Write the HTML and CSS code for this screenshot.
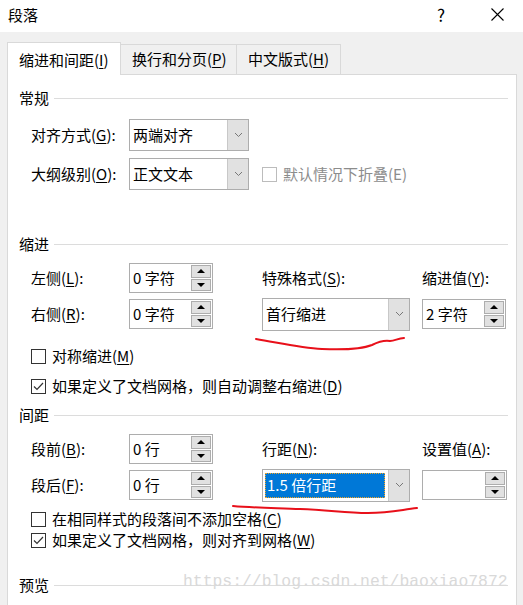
FILE: index.html
```html
<!DOCTYPE html>
<html lang="zh-CN">
<head>
    <meta charset="UTF-8">
    <title>段落</title>
    <link rel="stylesheet" href="styles.css">
</head>
<body>
<div class="window">
    <div class="titlebar">
        <span class="title">段落</span>
        <span class="help">?</span>
        <span class="close">
            <svg width="13" height="13" viewBox="0 0 13 13"><path d="M0.5 0.5 L12.5 12.5 M12.5 0.5 L0.5 12.5" stroke="#000" stroke-width="1.1" fill="none"/></svg>
        </span>
    </div>

    <div class="dialog">
        <div class="tabs">
            <div class="tab active">缩进和间距(<u>I</u>)</div>
            <div class="tab tab2">换行和分页(<u>P</u>)</div>
            <div class="tab tab3">中文版式(<u>H</u>)</div>
        </div>

        <div class="panel">
            <div class="heading h-general"><span>常规</span></div>
            <div class="grid general">
                <div class="lbl">对齐方式(<u>G</u>):</div>
                <div class="select w120"><span class="val">两端对齐</span><span class="arrow"><svg width="9" height="6" viewBox="0 0 9 6"><path d="M1 1 L4.5 4.5 L8 1" stroke="#777" fill="none"/></svg></span></div>
                <div></div>
                <div></div>
                <div class="lbl">大纲级别(<u>O</u>):</div>
                <div class="select w120"><span class="val">正文文本</span><span class="arrow"><svg width="9" height="6" viewBox="0 0 9 6"><path d="M1 1 L4.5 4.5 L8 1" stroke="#777" fill="none"/></svg></span></div>
                <div class="check disabled span2"><span class="box"></span>默认情况下折叠(E)</div>
            </div>

            <div class="heading h-indent"><span>缩进</span></div>
            <div class="grid indent">
                <div class="lbl">左侧(<u>L</u>):</div>
                <div class="spin"><span class="val">0 字符</span><span class="btns"><span class="btn up"></span><span class="btn down"></span></span></div>
                <div class="lbl">特殊格式(<u>S</u>):</div>
                <div class="lbl">缩进值(<u>Y</u>):</div>
                <div class="lbl">右侧(<u>R</u>):</div>
                <div class="spin"><span class="val">0 字符</span><span class="btns"><span class="btn up"></span><span class="btn down"></span></span></div>
                <div class="select w148 tall"><span class="val">首行缩进</span><span class="arrow"><svg width="9" height="6" viewBox="0 0 9 6"><path d="M1 1 L4.5 4.5 L8 1" stroke="#777" fill="none"/></svg></span></div>
                <div class="spin"><span class="val">2 字符</span><span class="btns"><span class="btn up"></span><span class="btn down"></span></span></div>
            </div>
            <div class="check c-mirror"><span class="box"></span>对称缩进(<u>M</u>)</div>
            <div class="check c-grid1"><span class="box checked"><svg width="13" height="13" viewBox="0 0 13 13"><path d="M2 6.5 L5 9.5 L11 3" stroke="#333" stroke-width="1.2" fill="none"/></svg></span>如果定义了文档网格，则自动调整右缩进(<u>D</u>)</div>

            <div class="heading h-spacing"><span>间距</span></div>
            <div class="grid spacing">
                <div class="lbl">段前(<u>B</u>):</div>
                <div class="spin"><span class="val">0 行</span><span class="btns"><span class="btn up"></span><span class="btn down"></span></span></div>
                <div class="lbl">行距(<u>N</u>):</div>
                <div class="lbl">设置值(<u>A</u>):</div>
                <div class="lbl">段后(<u>F</u>):</div>
                <div class="spin"><span class="val">0 行</span><span class="btns"><span class="btn up"></span><span class="btn down"></span></span></div>
                <div class="select w148 tall"><span class="val"><span class="picked">1.5 倍行距</span></span><span class="arrow"><svg width="9" height="6" viewBox="0 0 9 6"><path d="M1 1 L4.5 4.5 L8 1" stroke="#777" fill="none"/></svg></span></div>
                <div class="spin w85"><span class="val"></span><span class="btns"><span class="btn up"></span><span class="btn down"></span></span></div>
            </div>
            <div class="check c-nospace"><span class="box"></span>在相同样式的段落间不添加空格(<u>C</u>)</div>
            <div class="check c-grid2"><span class="box checked"><svg width="13" height="13" viewBox="0 0 13 13"><path d="M2 6.5 L5 9.5 L11 3" stroke="#333" stroke-width="1.2" fill="none"/></svg></span>如果定义了文档网格，则对齐到网格(<u>W</u>)</div>

            <div class="heading h-preview"><span>预览</span></div>
        </div>
    </div>

    <div class="watermark">https://blog.csdn.net/baoxiao7872</div>

    <svg class="scribble" width="523" height="605" viewBox="0 0 523 605">
        <path d="M256 339 C 280 343, 300 348, 322 349 C 345 350, 362 349, 372 345 C 380 341, 384 340, 390 341 C 395 341, 398 338, 404 338" stroke="#e8101a" stroke-width="2" fill="none" stroke-linecap="round"/>
        <path d="M233 506 C 255 508, 280 508, 300 509 C 330 510, 345 513, 368 513 C 390 513, 400 510, 417 508" stroke="#e8101a" stroke-width="2" fill="none" stroke-linecap="round"/>
    </svg>
</div>
</body>
</html>
```

FILE: styles.css
```css
body {
    margin: 0;
    padding: 0;
    font-family: "Noto Sans CJK SC", "Noto Sans", sans-serif;
    font-size: 15px;
    line-height: 20px;
    color: #000;
    background: #f0f0f0;
}

u {
    text-decoration-thickness: 1px;
    text-underline-offset: 2px;
}

.window {
    position: relative;
    width: 523px;
    height: 605px;
    overflow: hidden;
    background: #f0f0f0;
}

.titlebar {
    height: 32px;
    background: #fff;
    display: flex;
    align-items: center;
    padding: 0 0 3px 8px;
    box-sizing: border-box;
}

.title {
    flex: 1;
}

.help {
    font-size: 17px;
    width: 54px;
}

.close {
    display: flex;
    width: 32px;
}

.dialog {
    padding: 10px 0 0 7px;
}

.tabs {
    display: flex;
    align-items: flex-end;
    height: 32px;
}

.tab {
    box-sizing: border-box;
    height: 30px;
    border: 1px solid #d9d9d9;
    border-bottom: none;
    border-left: none;
    display: flex;
    align-items: center;
    padding-left: 11px;
    padding-bottom: 1px;
    background: #f0f0f0;
}

.tab.active {
    width: 114px;
    height: 33px;
    background: #fff;
    border-left: 1px solid #d9d9d9;
    margin-bottom: -1px;
    position: relative;
    z-index: 1;
    padding-top: 2px;
}

.tab2 {
    width: 116px;
}

.tab3 {
    width: 104px;
}

.panel {
    width: 510px;
    height: 540px;
    box-sizing: border-box;
    background: #fff;
    border: 1px solid #d9d9d9;
    border-bottom: none;
    padding-top: 13px;
}

.heading {
    display: flex;
    align-items: center;
    height: 20px;
    padding-left: 11px;
    margin-right: 8px;
}

.heading::after {
    content: "";
    flex: 1;
    height: 1px;
    background: #dcdcdc;
    margin-left: 5px;
}

.h-indent { margin-top: 44px; }
.h-spacing { margin-top: 9px; }
.h-preview { margin-top: 25px; }

.grid {
    display: grid;
    grid-template-columns: 98px 133px 160px 84px;
    align-items: center;
    padding-left: 23px;
}

.general {
    margin-top: 11px;
    grid-template-rows: 32px 32px;
    row-gap: 7px;
}

.indent {
    margin-top: 9px;
    grid-template-rows: 30px 30px;
    row-gap: 6px;
}

.spacing {
    margin-top: 9px;
    grid-template-rows: 30px 30px;
    row-gap: 6px;
}

.lbl {
    white-space: nowrap;
}

.span2 {
    grid-column: span 2;
}

.select {
    display: flex;
    box-sizing: border-box;
    height: 32px;
    border: 1px solid #adadad;
    background: #fff;
}

.select.tall {
    height: 33px;
}

.w120 { width: 120px; }
.w148 { width: 148px; }

.select .val {
    flex: 1;
    display: flex;
    align-items: center;
    padding-left: 3px;
    white-space: nowrap;
}

.select .arrow {
    width: 20px;
    background: #e1e1e1;
    border-left: 1px solid #c8c8c8;
    display: flex;
    align-items: center;
    justify-content: center;
}

.picked {
    display: flex;
    align-items: center;
    width: 120px;
    height: 25px;
    margin-left: -1px;
    padding-left: 2px;
    box-sizing: border-box;
    background: #0078d7;
    color: #fff;
    outline: 1px dotted #f5a623;
    outline-offset: -1px;
}

.spin {
    display: flex;
    box-sizing: border-box;
    width: 84px;
    height: 30px;
    border: 1px solid #adadad;
    background: #fff;
}

.spin.w85 {
    width: 85px;
}

.spin .val {
    flex: 1;
    padding-left: 3px;
    display: flex;
    align-items: center;
    white-space: nowrap;
}

.btns {
    width: 20px;
    display: flex;
    flex-direction: column;
    gap: 1px;
    padding: 1px 1px 1px 0;
}

.btn {
    flex: 1;
    background: #e1e1e1;
    border: 1px solid #adadad;
    display: flex;
    align-items: center;
    justify-content: center;
}

.btn.up::before {
    content: "";
    border-left: 4px solid transparent;
    border-right: 4px solid transparent;
    border-bottom: 4px solid #000;
}

.btn.down::before {
    content: "";
    border-left: 4px solid transparent;
    border-right: 4px solid transparent;
    border-top: 4px solid #000;
}

.check {
    display: flex;
    align-items: center;
    height: 20px;
    white-space: nowrap;
}

.check .box {
    box-sizing: border-box;
    width: 15px;
    height: 15px;
    border: 1px solid #333;
    margin-right: 6px;
    display: flex;
    align-items: center;
    justify-content: center;
    background: #fff;
}

.check.disabled {
    color: #8c8c8c;
}

.check.disabled .box {
    border-color: #bcbcbc;
}

.c-mirror, .c-grid1, .c-nospace, .c-grid2 {
    padding-left: 23px;
}

.c-mirror { margin-top: 17px; }
.c-grid1 { margin-top: 10px; }
.c-nospace { margin-top: 9px; }
.c-grid2 { margin-top: 1px; }

.watermark {
    position: absolute;
    left: 183px;
    top: 572px;
    font-family: "Liberation Mono", monospace;
    font-size: 16.4px;
    color: #d9d9d9;
    white-space: nowrap;
}

.scribble {
    position: absolute;
    left: 0;
    top: 0;
    pointer-events: none;
}
```
